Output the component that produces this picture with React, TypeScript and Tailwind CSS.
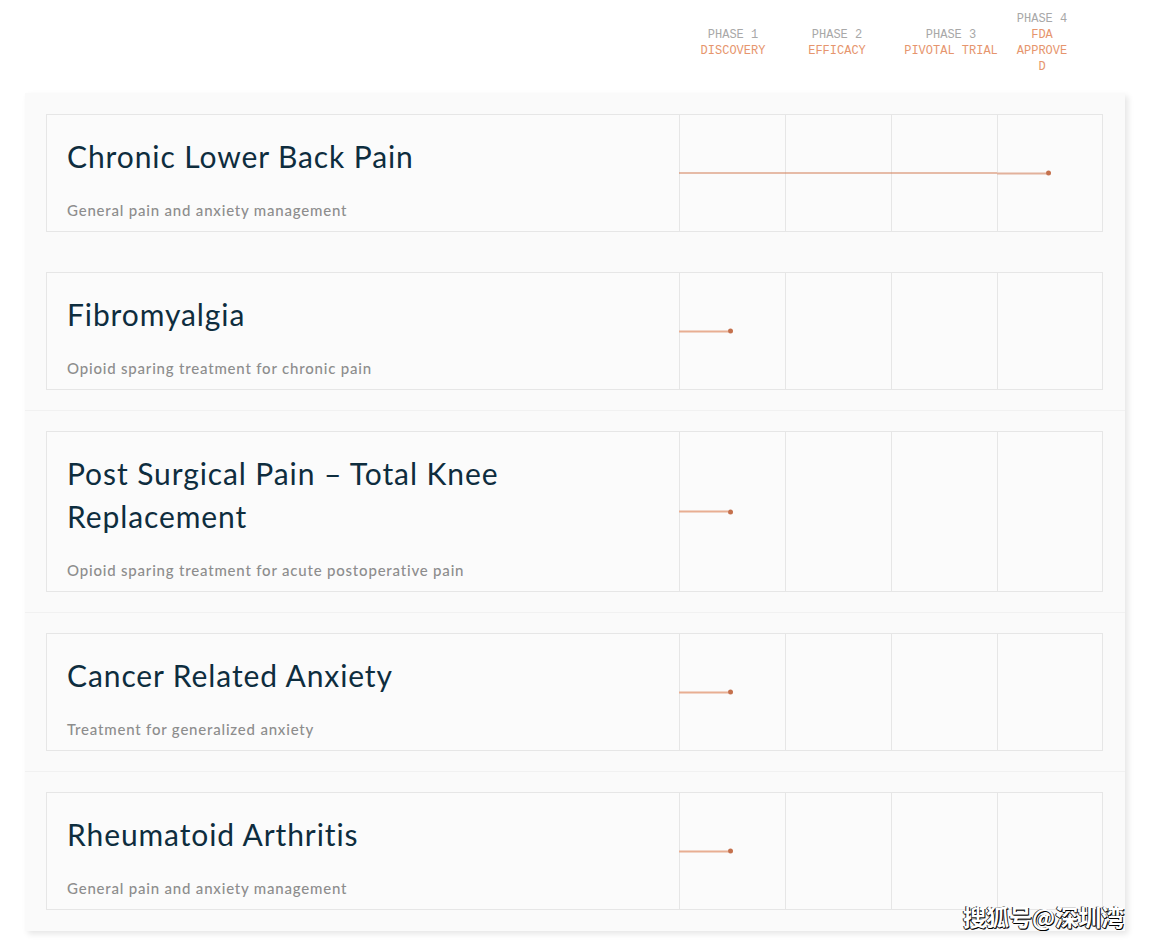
import React from "react";

type Row = { title: string[]; sub: string; progress: number; sep: boolean };

const rows: Row[] = [
  { title: ["Chronic Lower Back Pain"], sub: "General pain and anxiety management", progress: 372, sep: false },
  { title: ["Fibromyalgia"], sub: "Opioid sparing treatment for chronic pain", progress: 54, sep: true },
  { title: ["Post Surgical Pain – Total Knee", "Replacement"], sub: "Opioid sparing treatment for acute postoperative pain", progress: 54, sep: true },
  { title: ["Cancer Related Anxiety"], sub: "Treatment for generalized anxiety", progress: 54, sep: true },
  { title: ["Rheumatoid Arthritis"], sub: "General pain and anxiety management", progress: 54, sep: false },
];

function Card({ row }: { row: Row }) {
  const long = row.progress > 100;
  return (
    <div className="flex w-[1057px] border border-[#e6e6e6] bg-[#fbfbfb]">
      <div className="w-[632px] pl-[20px] pt-[20px] pb-[9px]">
        <div className="text-[30px] leading-[43px] text-[#0e2d3e] font-['Lato',sans-serif] tracking-[0.9px]">
          {row.title.map((t) => (
            <div key={t}>{t}</div>
          ))}
        </div>
        <div className="mt-[20px] text-[15px] leading-[24px] font-medium text-[#8d8d8d] font-['Lato',sans-serif] tracking-[0.8px]">
          {row.sub}
        </div>
      </div>
      <div className="relative flex flex-1">
        <div className="w-[106px] border-l border-[#e6e6e6]" />
        <div className="w-[106px] border-l border-[#e6e6e6]" />
        <div className="w-[106px] border-l border-[#e6e6e6]" />
        <div className="flex-1 border-l border-[#e6e6e6]" />
        <div
          className="absolute left-0 top-1/2 -translate-y-1/2 flex items-center"
          style={{ width: row.progress }}
        >
          {long ? (
            <>
              <div className="h-[1px] w-[318px] bg-[#d27d55]" />
              <div className="h-[2px] flex-1 bg-[#e2b19b]" />
            </>
          ) : (
            <div className="h-[2px] flex-1 bg-[#e8ae92]" />
          )}
          <div className="h-[5px] w-[5px] rounded-full bg-[#c5714d]" />
        </div>
      </div>
    </div>
  );
}

export default function App() {
  return (
    <div className="relative w-[1153px] h-[944px] bg-white pl-[25px] overflow-hidden">
      <div className="flex h-[86px] items-center font-['Liberation_Mono',monospace] text-[12px] leading-[16px] text-center">
        <div className="w-[654px]" />
        <div className="w-[108px]">
          <div className="text-[#a8a8a8]">PHASE 1</div>
          <div className="text-[#e6956d]">DISCOVERY</div>
        </div>
        <div className="w-[100px]">
          <div className="text-[#a8a8a8]">PHASE 2</div>
          <div className="text-[#e6956d]">EFFICACY</div>
        </div>
        <div className="w-[128px]">
          <div className="text-[#a8a8a8]">PHASE 3</div>
          <div className="text-[#e6956d]">PIVOTAL TRIAL</div>
        </div>
        <div className="w-[54px] [overflow-wrap:anywhere]">
          <div className="text-[#a8a8a8]">PHASE 4</div>
          <div className="text-[#e6956d]">FDA APPROVED</div>
        </div>
      </div>
      <div className="mt-[7px] w-[1100px] bg-[#fafafa] pt-[1px] shadow-[3px_3px_6px_rgba(0,0,0,0.10)]">
        {rows.map((r, i) => (
          <div
            key={i}
            className={
              "px-[21px] pt-[20px] " +
              (i < rows.length - 1
                ? r.sep
                  ? "pb-[20px] border-b border-[#f1f1f1]"
                  : "pb-[19px] border-b border-[#fafafa]"
                : "pb-[21px]")
            }
          >
            <Card row={r} />
          </div>
        ))}
      </div>
      <div className="absolute left-[963px] top-[901px] text-[23px] leading-[30px] font-bold text-white font-['Noto_Sans_CJK_SC',sans-serif] [text-shadow:1px_1px_0_#000,-1px_0_0_#222,0_1px_0_#000]">
        搜狐号@深圳湾
      </div>
    </div>
  );
}
